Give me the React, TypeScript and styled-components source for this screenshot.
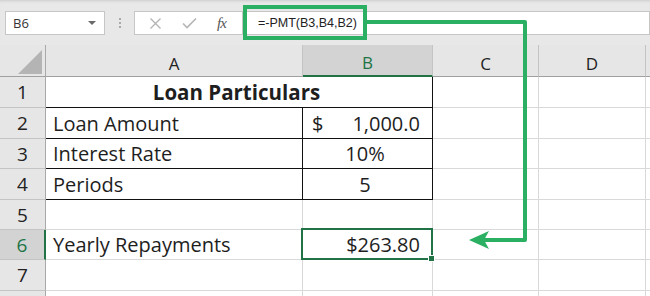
import styled, { createGlobalStyle, css } from 'styled-components'

const GlobalStyle = createGlobalStyle`
  body {
    margin: 0;
    background: #ffffff;
    font-family: "Open Sans", "Liberation Sans", sans-serif;
  }
`

const GREEN = '#217346'
const ANNOT = '#2aaf63'

const Page = styled.div`
  position: relative;
  width: 650px;
  height: 296px;
  overflow: hidden;
  background: #ffffff;
`

const TopBar = styled.div`
  height: 45px;
  box-sizing: border-box;
  display: flex;
  align-items: flex-start;
  padding: 11px 0 0 5px;
  background: #e8e8e8;
  box-shadow: inset 0 3px 3px -2px rgba(0, 0, 0, 0.12);
`

const NameBox = styled.div`
  width: 100px;
  height: 24px;
  box-sizing: border-box;
  border: 1px solid #c6c6c6;
  background: #ffffff;
  display: flex;
  align-items: center;
  justify-content: space-between;
  padding: 0 6px 0 7px;
  font-size: 13px;
  color: #333;
`

const Caret = styled.span`
  width: 0;
  height: 0;
  border-left: 4px solid transparent;
  border-right: 4px solid transparent;
  border-top: 4px solid #6a6a6a;
  margin-right: 2px;
`

const Grip = styled.div`
  width: 29px;
  height: 24px;
  display: flex;
  flex-direction: column;
  align-items: center;
  justify-content: center;
  gap: 2px;

  span {
    width: 2px;
    height: 2px;
    background: #aaaaaa;
  }
`

const FxGroup = styled.div`
  width: 109px;
  height: 24px;
  box-sizing: border-box;
  border: 1px solid #c6c6c6;
  background: #ffffff;
  display: flex;
  align-items: center;
  justify-content: space-around;
  padding: 0 6px 0 4px;
`

const FxMark = styled.span`
  font-family: "Liberation Serif", serif;
  font-style: italic;
  font-size: 15px;
  color: #555;
  letter-spacing: -1px;
`

const FormulaInput = styled.div`
  flex: 1;
  height: 24px;
  box-sizing: border-box;
  border: 1px solid #c6c6c6;
  border-left: none;
  background: #ffffff;
  display: flex;
  align-items: center;
  padding-left: 15px;
  font-family: "Liberation Sans", Arial, sans-serif;
  font-size: 12.5px;
  color: #222;
`

const Sheet = styled.div`
  display: grid;
  grid-template-columns: 46px 257px 130px 106px 107px 1fr;
  grid-template-rows: 32px 31px 31px 30px 31px 30px 30px 31px 31px;
`

const Corner = styled.div`
  position: relative;
  background: #e6e6e6;
  border-right: 1px solid #a9a9a9;
  border-bottom: 1px solid #a0a0a0;

  &::after {
    content: '';
    position: absolute;
    right: 3px;
    bottom: 2px;
    border-left: 24px solid transparent;
    border-bottom: 24px solid #b4b4b4;
  }
`

const ColHead = styled.div<{ $active?: boolean }>`
  box-sizing: border-box;
  background: ${p => (p.$active ? '#d3d3d3' : '#e6e6e6')};
  color: ${p => (p.$active ? GREEN : '#222')};
  border-right: 1px solid #c4c4c4;
  border-bottom: ${p => (p.$active ? `2px solid ${GREEN}` : '1px solid #a0a0a0')};
  display: flex;
  align-items: center;
  justify-content: center;
  padding-top: 5px;
  font-size: 17px;
`

const RowHead = styled.div<{ $active?: boolean }>`
  box-sizing: border-box;
  background: ${p => (p.$active ? '#d3d3d3' : '#e6e6e6')};
  color: ${p => (p.$active ? GREEN : '#222')};
  border-right: ${p => (p.$active ? `2px solid ${GREEN}` : '1px solid #a9a9a9')};
  border-bottom: 1px solid #c4c4c4;
  display: flex;
  align-items: center;
  justify-content: center;
  font-size: 19px;
`

type Align = 'left' | 'center' | 'right' | 'spread'

const justify: Record<Align, string> = {
  left: 'flex-start',
  center: 'center',
  right: 'flex-end',
  spread: 'space-between',
}

const Cell = styled.div<{
  $align?: Align
  $bold?: boolean
  $span?: number
  $rb?: boolean
  $bb?: boolean
  $selected?: boolean
}>`
  position: relative;
  box-sizing: border-box;
  grid-column: span ${p => p.$span ?? 1};
  border-right: 1px solid ${p => (p.$rb ? '#111' : '#d9d9d9')};
  border-bottom: 1px solid ${p => (p.$bb ? '#111' : '#d9d9d9')};
  display: flex;
  align-items: center;
  justify-content: ${p => justify[p.$align ?? 'left']};
  padding: 0 12px 0 7px;
  font-size: ${p => (p.$bold ? 20.5 : 20)}px;
  font-weight: ${p => (p.$bold ? 700 : 400)};
  color: #1e1e1e;
  white-space: nowrap;

  ${p =>
    p.$selected &&
    css`
      &::after {
        content: '';
        position: absolute;
        left: -2px;
        top: -2px;
        right: -1px;
        bottom: -1px;
        border: 2px solid ${GREEN};
      }
      &::before {
        content: '';
        position: absolute;
        right: -3px;
        bottom: -3px;
        width: 5px;
        height: 5px;
        background: ${GREEN};
        border: 1px solid #fff;
        z-index: 1;
      }
    `}
`

const Annotation = styled.svg`
  position: absolute;
  left: 0;
  top: 0;
  pointer-events: none;
`

// the fifth header is only a sliver of column E at the right edge
const columns = ['A', 'B', 'C', 'D', '']

function Blank({ n }: { n: number }) {
  return (
    <>
      {Array.from({ length: n }, (_, i) => (
        <Cell key={i} />
      ))}
    </>
  )
}

export default function App() {
  return (
    <Page>
      <GlobalStyle />
      <TopBar>
        <NameBox>
          B6
          <Caret />
        </NameBox>
        <Grip>
          <span />
          <span />
          <span />
        </Grip>
        <FxGroup>
          <svg width="13" height="13" viewBox="0 0 13 13">
            <path d="M1.5 1.5l10 10M11.5 1.5l-10 10" stroke="#b5b5b5" strokeWidth="1.4" />
          </svg>
          <svg width="15" height="12" viewBox="0 0 15 12">
            <path d="M1 6.5l4 4L14 1.5" stroke="#b5b5b5" strokeWidth="1.6" fill="none" />
          </svg>
          <FxMark>fx</FxMark>
        </FxGroup>
        <FormulaInput>=-PMT(B3,B4,B2)</FormulaInput>
      </TopBar>

      <Sheet>
        <Corner />
        {columns.map((c, i) => (
          <ColHead key={i} $active={c === 'B'}>
            {c}
          </ColHead>
        ))}

        <RowHead>1</RowHead>
        <Cell $span={2} $align="center" $bold $rb $bb>
          Loan Particulars
        </Cell>
        <Blank n={3} />

        <RowHead>2</RowHead>
        <Cell $rb $bb>Loan Amount</Cell>
        <Cell $rb $bb $align="spread" style={{ paddingLeft: 9 }}>
          <span>$</span>
          <span>1,000.0</span>
        </Cell>
        <Blank n={3} />

        <RowHead>3</RowHead>
        <Cell $rb $bb>Interest Rate</Cell>
        <Cell $rb $bb $align="center">10%</Cell>
        <Blank n={3} />

        <RowHead>4</RowHead>
        <Cell $rb $bb>Periods</Cell>
        <Cell $rb $bb $align="center">5</Cell>
        <Blank n={3} />

        <RowHead>5</RowHead>
        <Blank n={5} />

        <RowHead $active>6</RowHead>
        <Cell>Yearly Repayments</Cell>
        <Cell $align="right" $selected>$263.80</Cell>
        <Blank n={3} />

        <RowHead>7</RowHead>
        <Blank n={5} />

        <RowHead />
        <Blank n={5} />
      </Sheet>

      <Annotation width="650" height="296" viewBox="0 0 650 296">
        <rect x="245" y="7" width="120" height="31" fill="none" stroke={ANNOT} strokeWidth="4" />
        <path
          d="M367 22H525V240H484"
          fill="none"
          stroke={ANNOT}
          strokeWidth="4"
          strokeLinejoin="round"
        />
        <polygon points="469,240 489,231 484,240 489,249" fill={ANNOT} />
      </Annotation>
    </Page>
  )
}
